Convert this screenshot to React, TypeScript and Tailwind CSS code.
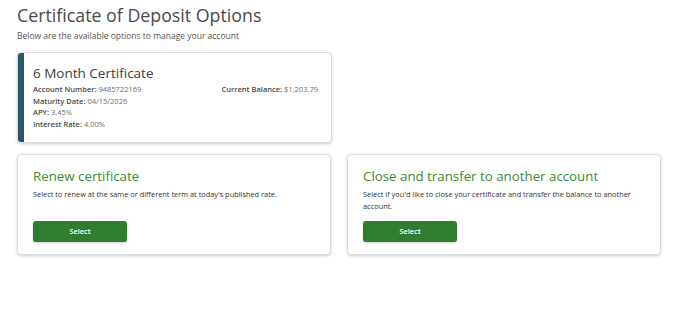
import React from "react";

const DETAILS_LEFT: [string, string][] = [
  ["Account Number:", "9485722169"],
  ["Maturity Date:", "04/15/2026"],
  ["APY:", "3.45%"],
  ["Interest Rate:", "4.00%"],
];

function Detail({ label, value }: { label: string; value: string }) {
  return (
    <div className="leading-[11.7px]">
      <span className="font-semibold text-[#4a4a4a]">{label}</span>{" "}
      <span className="text-[#6b6b6b]">{value}</span>
    </div>
  );
}

function OptionCard({ title, text }: { title: string; text: string }) {
  return (
    <div className="flex h-[101px] flex-col rounded-[4px] border border-[#dcdcdc] bg-white px-[15px] pb-[12px] pt-[12px] shadow-[0_1px_3px_rgba(0,0,0,0.18)]">
      <div className="text-[13.3px] leading-[18px] text-[#3b8a35]">{title}</div>
      <p className="mt-[3px] text-[7.4px] leading-[12px] text-[#333]">{text}</p>
      <button className="mt-auto h-[21px] w-[94px] rounded-[3px] bg-[#2f7d2e] text-[7.4px] font-semibold text-white shadow-[0_1px_2px_rgba(0,0,0,0.2)]">
        Select
      </button>
    </div>
  );
}

export default function App() {
  return (
    <div className="min-h-[327px] bg-white px-[17px] pt-[3px] font-['Open_Sans',sans-serif]">
      <h1 className="text-[17.8px] leading-[24px] text-[#4a4a4a]">Certificate of Deposit Options</h1>
      <p className="mt-[3px] text-[8.5px] leading-[12px] text-[#555]">
        Below are the available options to manage your account
      </p>

      <div className="mt-[10px] flex w-[315px] overflow-hidden rounded-[4px] border border-[#dcdcdc] bg-white shadow-[0_1px_3px_rgba(0,0,0,0.18)]">
        <div className="w-[6px] shrink-0 bg-[#2b5767]" />
        <div className="flex-1 px-[9px] pb-[11px] pt-[11px]">
          <div className="text-[13.5px] leading-[18px] text-[#3c3c3c]">6 Month Certificate</div>
          <div className="mt-[2px] flex text-[7.5px]">
            <div className="flex-1">
              {DETAILS_LEFT.map(([l, v]) => (
                <Detail key={l} label={l} value={v} />
              ))}
            </div>
            <div className="pr-[4px]">
              <Detail label="Current Balance:" value="$1,203.79" />
            </div>
          </div>
        </div>
      </div>

      <div className="mt-[11px] grid grid-cols-2 gap-[16px] pr-[2px]">
        <OptionCard
          title="Renew certificate"
          text="Select to renew at the same or different term at today's published rate."
        />
        <OptionCard
          title="Close and transfer to another account"
          text="Select if you'd like to close your certificate and transfer the balance to another account."
        />
      </div>
    </div>
  );
}
